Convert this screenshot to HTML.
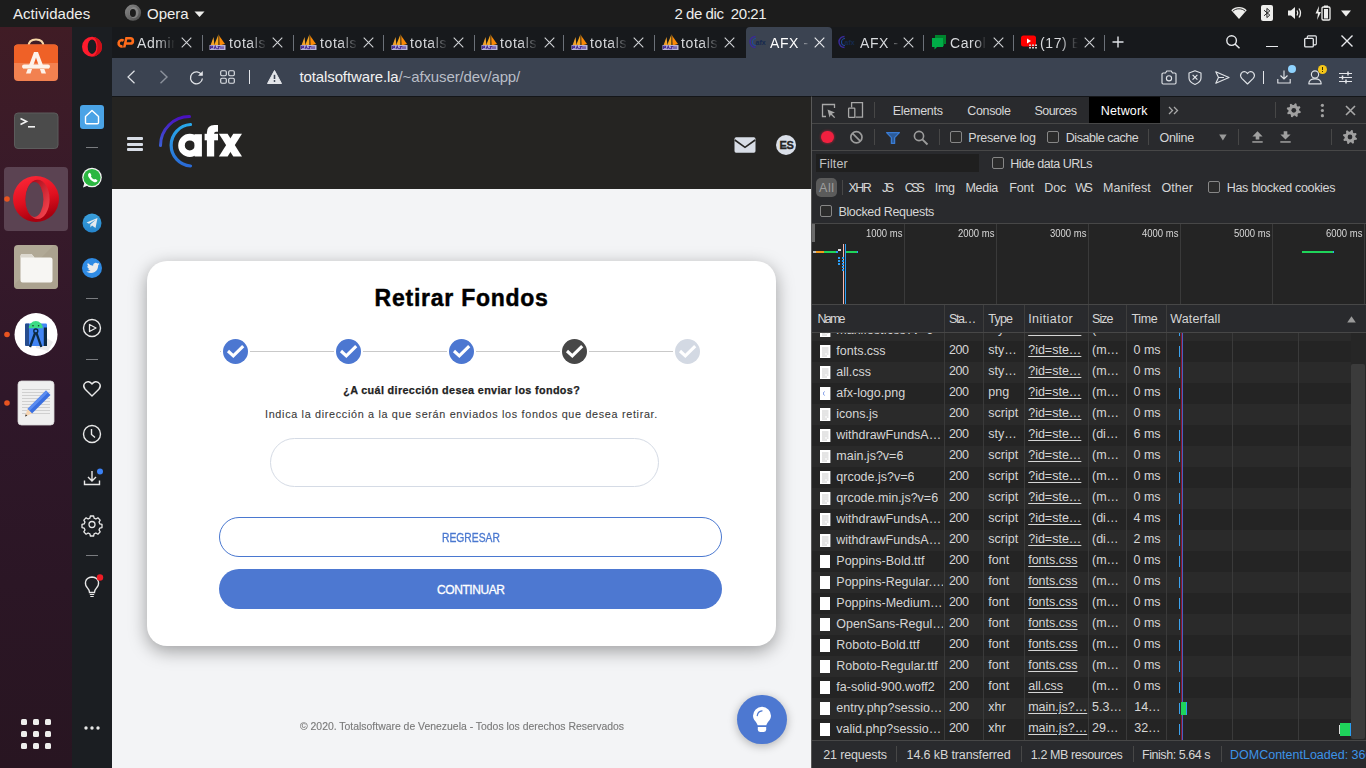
<!DOCTYPE html>
<html><head><meta charset="utf-8">
<style>
*{margin:0;padding:0;box-sizing:border-box}
html,body{width:1366px;height:768px;overflow:hidden;background:#1d1d1d;font-family:"Liberation Sans",sans-serif}
.a{position:absolute}
.t{position:absolute;white-space:nowrap;line-height:1}
svg{position:absolute;overflow:visible}
#topbar{left:0;top:0;width:1366px;height:27px;background:#1c1c1c}
#dock{left:0;top:27px;width:72px;height:741px;background:linear-gradient(180deg,#401c25 0%,#371a2a 25%,#2f1729 50%,#2b1625 75%,#281521 100%)}
#side{left:72px;top:27px;width:40px;height:741px;background:#1b1e22}
#tabs{left:112px;top:27px;width:1254px;height:31px;background:#17191c}
#addr{left:112px;top:58px;width:1254px;height:38px;background:#3b4351}
#page{left:112px;top:96px;width:699px;height:672px;background:#f3f4f6;overflow:hidden}
#hdr{left:0;top:0;width:699px;height:93px;background:#252422;border-top:1px solid #141619}
#dt{left:811px;top:96px;width:555px;height:672px;background:#242424;border-left:1px solid #595959;border-top:1px solid #141619;overflow:hidden}
</style></head><body>
<div id="topbar" class="a">
  <div class="t" style="left:13px;top:6px;font-size:15px;color:#eeeeec;letter-spacing:0.05px">Actividades</div>
  <svg style="left:124px;top:4px" width="18" height="18" viewBox="124 4 18 18"><defs><linearGradient id="opg" x1="0" y1="0" x2="1" y2="1"><stop offset="0" stop-color="#8a8a8a"/><stop offset="1" stop-color="#4a4a4a"/></linearGradient></defs><ellipse cx="133" cy="12.7" rx="8.1" ry="8.1" fill="url(#opg)"/><ellipse cx="133.9" cy="12.6" rx="4.6" ry="5.6" fill="#9a9a9a" opacity="0.55"/><ellipse cx="132.9" cy="13" rx="3" ry="3.9" fill="#1c1c1c"/></svg>
  <div class="t" style="left:147px;top:6px;font-size:15px;color:#eeeeec">Opera</div>
  <svg style="left:194px;top:10.5px" width="11" height="7" viewBox="0 0 11 7"><path d="M0.5 0.5h10L5.5 6z" fill="#eeeeec"/></svg>
  <div class="t" style="left:674.5px;top:6px;font-size:15px;color:#eeeeec;letter-spacing:-0.45px">2 de dic&nbsp; 20:21</div>
  <svg style="left:1231px;top:6px" width="16" height="14" viewBox="0 0 16 14"><path d="M8 13L0.3 4.2C2.4 2.2 5 1 8 1s5.6 1.2 7.7 3.2z" fill="#eeeeec"/><path d="M1.8 5.2 C3.6 3.6 5.6 2.8 8 2.8 S12.4 3.6 14.2 5.2" fill="none" stroke="#1c1c1c" stroke-width="0.9"/></svg>
  <svg style="left:1261px;top:5px" width="12" height="16" viewBox="0 0 12 16"><rect x="0" y="0" width="12" height="16" rx="2" fill="#eeeeec"/><path d="M3 5.2l5.8 4.9-2.9 2.5V3.4L8.8 5.9 3 10.8" fill="none" stroke="#1c1c1c" stroke-width="0.95"/></svg>
  <svg style="left:1287px;top:5px" width="15" height="16" viewBox="0 0 15 16"><path d="M1 5.5h3L8 2v12L4 10.5H1z" fill="#eeeeec"/><path d="M10 5.5q1.5 2.5 0 5M12 3.5q3 4.5 0 9" fill="none" stroke="#eeeeec" stroke-width="1.3"/></svg>
  <svg style="left:1315px;top:5px" width="16" height="16" viewBox="0 0 16 16"><path d="M4 1L0.5 8.5h2.5L2 15l4-8H3.5z" fill="#eeeeec"/><rect x="7" y="2" width="8" height="13" rx="1.2" fill="none" stroke="#eeeeec" stroke-width="1.3"/><rect x="9" y="0.5" width="4" height="2" fill="#eeeeec"/><rect x="9" y="4" width="4" height="9.5" fill="#eeeeec"/></svg>
  <svg style="left:1341px;top:10px" width="10" height="7" viewBox="0 0 10 7"><path d="M0 0.5h10L5 6.5z" fill="#eeeeec"/></svg>
</div>
<div id="dock" class="a">
<svg style="left:0;top:0" width="72" height="741" viewBox="0 27 72 741">
  <!-- software -->
  <path d="M28.5 46.5 Q28.5 39.5 36 39.5 Q43.5 39.5 43.5 46.5" fill="none" stroke="#f6d7a7" stroke-width="2"/>
  <rect x="14" y="44.5" width="44" height="36.5" rx="4" fill="#f28150"/>
  <path d="M14 48.5 a4 4 0 0 1 4-4 h36 a4 4 0 0 1 4 4 V63 H14z" fill="#ef6127"/>
  <path d="M26 73.5 L34 52 h4 L46 73.5 h-4.5 L36 57.5 30.5 73.5z" fill="#fdf2ea"/>
  <rect x="22" y="64.5" width="28" height="4" rx="2" fill="#fdf2ea"/>
  <rect x="23" y="68" width="26" height="1" fill="#f6c4a8"/>
  <!-- terminal -->
  <rect x="14.5" y="113" width="43.5" height="35.5" rx="3.5" fill="#4b4b4b" stroke="#5c5c5c" stroke-width="1"/>
  <path d="M20.5 118.5 L26.5 121.5 20.5 124.5" fill="none" stroke="#f2f2f2" stroke-width="1.6"/>
  <rect x="28" y="126" width="7" height="1.6" fill="#f2f2f2"/>
  <!-- opera highlight -->
  <rect x="4" y="167" width="64" height="64" rx="4" fill="#5b4352"/>
  <defs>
   <linearGradient id="og" x1="0" y1="0" x2="0.3" y2="1"><stop offset="0" stop-color="#ff2a3a"/><stop offset="0.6" stop-color="#e0101f"/><stop offset="1" stop-color="#a8000f"/></linearGradient>
   <linearGradient id="og2" x1="0" y1="0" x2="1" y2="1"><stop offset="0" stop-color="#9a0010"/><stop offset="1" stop-color="#ff4b55"/></linearGradient>
  </defs>
  <circle cx="36" cy="199" r="23" fill="url(#og)"/>
  <ellipse cx="37.6" cy="199.3" rx="12" ry="19.6" fill="url(#og2)"/>
  <ellipse cx="34.4" cy="199.5" rx="9" ry="17.4" fill="#5b4352"/>
  <circle cx="7" cy="199" r="2.8" fill="#e95420"/>
  <!-- files -->
  <rect x="14" y="245" width="44" height="44" rx="4" fill="#b1a996"/>
  <path d="M14 285 L54 245 h0 a4 4 0 0 1 4 4 v36 a4 4 0 0 1 -4 4 h-36 a4 4 0 0 1 -4 -4z" fill="#a79f8b" opacity="0.6"/>
  <path d="M20.5 256 a2 2 0 0 1 2 -2 h9 l3 3.5 h16 a2 2 0 0 1 2 2 v21 a2 2 0 0 1 -2 2 h-28 a2 2 0 0 1 -2 -2z" fill="#f7f6f3"/>
  <path d="M20.5 256 a2 2 0 0 1 2 -2 h9 l3 3.5 H20.5z" fill="#dcd8cf"/>
  <!-- android studio -->
  <circle cx="36" cy="334.5" r="21.5" fill="#ffffff"/>
  
  <path d="M34 330 L53 342 L48 351 L36 348z" fill="#ececec"/>
  <rect x="25" y="323.5" width="22" height="22.5" rx="1.2" fill="#4285f4"/>
  <path d="M25 324.7 a1.2 1.2 0 0 1 1.2 -1.2 H29 V346 H26.2 a1.2 1.2 0 0 1 -1.2 -1.2z" fill="#1d3b6e" opacity="0.75"/>
  <path d="M28.8 328.3 a7 7.3 0 0 1 14 0z" fill="#3ddc84"/>
  <circle cx="33" cy="325.8" r="0.8" fill="#1b3a2a"/><circle cx="38.6" cy="325.8" r="0.8" fill="#1b3a2a"/>
  <rect x="43.8" y="327.5" width="3.2" height="18.5" fill="#0d2a44"/>
  <path d="M35.8 331 L30 347 M35.8 331 L41.3 347" stroke="#0d2a44" stroke-width="2.3" fill="none"/>
  <circle cx="35.8" cy="331" r="2" fill="#4285f4" stroke="#0d2a44" stroke-width="1.4"/>
  <circle cx="7" cy="334.5" r="2.8" fill="#e95420"/>
  <!-- text editor -->
  <rect x="18" y="381" width="36" height="44" rx="3.5" fill="#efefef"/>
  <rect x="18" y="381" width="36" height="44" rx="3.5" fill="none" stroke="#d8d8d8" stroke-width="0.8"/>
  <g stroke="#c8c8c8" stroke-width="0.8"><path d="M22 389.5h28M22 392.5h28M22 395.5h28M22 398.5h28M22 401.5h28M22 404.5h28M22 407.5h28M22 410.5h28M22 413.5h28"/></g>
  <path d="M46 390.5 L50.5 395 L32 413.5 L27.5 409z" fill="#3a6fe0"/>
  <path d="M46 390.5 L48 392.5 L29.5 411 L27.5 409z" fill="#5b8cf0"/>
  <path d="M27.5 409 L32 413.5 L25 416.5z" fill="#f4d3b0"/>
  <path d="M25.8 414.2 L27.3 415.7 L25 416.5z" fill="#333"/>
  <circle cx="7" cy="403" r="2.8" fill="#e95420"/>
  <!-- grid -->
  <g fill="#eeeeec">
   <rect x="21" y="719" width="6" height="6" rx="1.5"/><rect x="33" y="719" width="6" height="6" rx="1.5"/><rect x="45" y="719" width="6" height="6" rx="1.5"/>
   <rect x="21" y="731" width="6" height="6" rx="1.5"/><rect x="33" y="731" width="6" height="6" rx="1.5"/><rect x="45" y="731" width="6" height="6" rx="1.5"/>
   <rect x="21" y="743" width="6" height="6" rx="1.5"/><rect x="33" y="743" width="6" height="6" rx="1.5"/><rect x="45" y="743" width="6" height="6" rx="1.5"/>
  </g>
</svg>
</div>
<div id="side" class="a">
<svg style="left:0;top:0" width="40" height="741" viewBox="72 27 40 741">
  <circle cx="92" cy="46.7" r="10" fill="#ff1b2d"/>
  <ellipse cx="92" cy="46.7" rx="4.3" ry="7.3" fill="#1b1e22"/>
  <path d="M92 36.7 a10 10 0 0 1 0 20 a5.5 10 0 0 0 0 -20z" fill="#cc0f16"/>
  <rect x="80" y="105" width="24" height="24" rx="3" fill="#4aa3e6"/>
  <path d="M85.5 116.5 L92 110.5 L98.5 116.5 V122.5 a1.2 1.2 0 0 1 -1.2 1.2 H86.7 a1.2 1.2 0 0 1 -1.2 -1.2z" fill="none" stroke="#fff" stroke-width="1.4" stroke-linejoin="round"/>
  <g stroke="#7a7c80" stroke-width="1.2"><path d="M86 147.5h12M86 298.5h12M86 359.5h12M86 555.5h12"/></g>
  <circle cx="92" cy="177.5" r="9.8" fill="#f4f4f4"/>
  <circle cx="92" cy="177.5" r="8.6" fill="#2bb741"/>
  <path d="M83 187.5 L84.5 182.5 L88 185.5z" fill="#f4f4f4"/>
  <path d="M88.8 173.3 q0.8-1 1.6 0 l0.9 1.6 q0.3 0.7 -0.4 1.3 q0.9 2.3 3.2 3.2 q0.6 -0.7 1.3 -0.4 l1.6 0.9 q1 0.8 0 1.6 q-1.4 1.4 -3.6 0.2 q-3.5 -1.9 -5 -5 q-1 -2.2 0.4 -3.4z" fill="#fff"/>
  <defs><linearGradient id="tg" x1="0" y1="0" x2="0" y2="1"><stop offset="0" stop-color="#3aa0dc"/><stop offset="1" stop-color="#2585cc"/></linearGradient></defs>
  <circle cx="92" cy="223" r="9.5" fill="url(#tg)"/>
  <path d="M86.5 222.5 L97.5 218 L95.5 228 L92 225.5 L90.5 227.5 L90.3 224.5 L96 219.5 L89 223.8z" fill="#e6eaee"/>
  <circle cx="92" cy="268" r="10" fill="#2f8be4"/>
  <path d="M86.5 271.5 q2.5 0.3 4 -1 q-2 -0.3 -2.5 -1.8 q0.8 0.1 1.2 -0.1 q-2 -0.6 -2 -2.6 q0.6 0.3 1.2 0.3 q-1.8 -1.5 -0.6 -3.3 q2.2 2.6 5.3 2.8 q-0.2 -2.6 2.4 -3.1 q1.2 -0.1 2 0.8 q1 -0.2 1.6 -0.6 q-0.3 1 -1.1 1.5 q0.8 0 1.4 -0.4 q-0.5 0.8 -1.2 1.3 q0.1 4.4 -3.5 6.7 q-3.6 2.1 -7.7 -0.1z" fill="#ececec"/>
  <circle cx="92" cy="328" r="8.5" fill="none" stroke="#e8e8e8" stroke-width="1.4"/>
  <path d="M89.5 324.5 L96 328 L89.5 331.5z" fill="none" stroke="#e8e8e8" stroke-width="1.3" stroke-linejoin="round"/>
  <path d="M92 396 L85.2 389.2 q-2.4-2.6 -1-5.2 q1.6-2.6 4.4-2.2 q2 0.4 3.4 2.2 q1.4-1.8 3.4-2.2 q2.8-0.4 4.4 2.2 q1.4 2.6 -1 5.2z" fill="none" stroke="#e8e8e8" stroke-width="1.4" stroke-linejoin="round"/>
  <circle cx="92" cy="434" r="8.5" fill="none" stroke="#e8e8e8" stroke-width="1.4"/>
  <path d="M91.5 429 V434.5 L95 437.5" fill="none" stroke="#e8e8e8" stroke-width="1.4"/>
  <path d="M92 471 V481 M88 477 L92 481 L96 477 M84.5 480.5 V484.5 H99.5 V480.5" fill="none" stroke="#e8e8e8" stroke-width="1.4"/>
  <circle cx="100" cy="471.5" r="3" fill="#3b82f6"/>
  <g transform="translate(92 524.5)"><path d="M-1.6 -8.5 h3.2 l0.5 2.2 l1.8 0.8 l2 -1.2 l2.3 2.3 l-1.2 2 l0.8 1.8 l2.2 0.5 v3.2 l-2.2 0.5 l-0.8 1.8 l1.2 2 l-2.3 2.3 l-2 -1.2 l-1.8 0.8 l-0.5 2.2 h-3.2 l-0.5 -2.2 l-1.8 -0.8 l-2 1.2 l-2.3 -2.3 l1.2 -2 l-0.8 -1.8 l-2.2 -0.5 v-3.2 l2.2 -0.5 l0.8 -1.8 l-1.2 -2 l2.3 -2.3 l2 1.2 l1.8 -0.8z" fill="none" stroke="#e8e8e8" stroke-width="1.3" stroke-linejoin="round"/><circle r="3" fill="none" stroke="#e8e8e8" stroke-width="1.3"/></g>
  <path d="M89.5 592.5 q0-2.5 -2-4.5 q-2.5-2.5 -2-6 q0.8-4.5 6.5-5 q5.7 0.5 6.5 5 q0.5 3.5 -2 6 q-2 2 -2 4.5z" fill="none" stroke="#e8e8e8" stroke-width="1.3"/>
  <path d="M89.8 594.5h4.4M90.3 596.5h3.4" stroke="#e8e8e8" stroke-width="1.2"/>
  <circle cx="100" cy="577.5" r="3.2" fill="#ee1c25"/>
  <g fill="#e8e8e8"><circle cx="86" cy="728" r="1.7"/><circle cx="92" cy="728" r="1.7"/><circle cx="98" cy="728" r="1.7"/></g>
</svg>
</div>
<div id="tabs" class="a"></div>
<svg style="left:114px;top:32px" width="24" height="20" viewBox="114 32 24 20"><path d="M123.6 40.7 A3.15 3.15 0 1 0 122.6 46.3" fill="none" stroke="#ff6c1a" stroke-width="2.6"/><path d="M125.4 37 H130.3 A3.9 3.9 0 0 1 130.3 44.8 H125.9 L126.5 42.3 H130.2 A1.35 1.35 0 0 0 130.2 39.6 H127.3 L125.5 47.6 H122.9z" fill="#ff6c1a"/></svg>
<div class="t" style="left:137px;top:36px;font-size:14px;color:#d8dadd;width:38px;overflow:hidden;-webkit-mask-image:linear-gradient(90deg,#000 55%,transparent 100%);height:16px;line-height:14px;letter-spacing:0.6px">Admin</div>
<svg style="left:181px;top:37px" width="11" height="11" viewBox="0 0 11 11"><path d="M0.7 0.7 L10.3 10.3 M10.3 0.7 L0.7 10.3" stroke="#d0d2d6" stroke-width="1.1"/></svg>
<div class="a" style="left:202px;top:35px;width:1px;height:16px;background:#6b7078"></div>
<div class="a" style="left:293px;top:35px;width:1px;height:16px;background:#6b7078"></div>
<div class="a" style="left:383px;top:35px;width:1px;height:16px;background:#6b7078"></div>
<div class="a" style="left:474px;top:35px;width:1px;height:16px;background:#6b7078"></div>
<div class="a" style="left:563px;top:35px;width:1px;height:16px;background:#6b7078"></div>
<div class="a" style="left:654px;top:35px;width:1px;height:16px;background:#6b7078"></div>
<svg style="left:208.5px;top:34px" width="17" height="17" viewBox="0 0 17 17"><path d="M1.5 11.5 L4.5 3 L5.5 11.5z" fill="#f2a12a"/><path d="M5 11.5 L9.5 0.3 L9.5 11.5z" fill="#f6a51e"/><path d="M10 1.5 L16 10 L10.5 11.5z" fill="#fb8a06"/><path d="M9.5 0.3 L10.5 1.8 L10 11.5 H9.3z" fill="#5a3a10" opacity="0.6"/><rect x="0.5" y="11" width="16" height="5" fill="#b9b3d6"/><path d="M1.5 15 V12.2 H3.6 V13.6 H1.8 M5 15 L6.2 12.2 L7.4 15 M8.6 12.5 H10.4 L8.6 14.8 H10.4 M12 12.2 V15 M14 12.2 V15" fill="none" stroke="#4a2f96" stroke-width="1.1"/></svg>
<div class="t" style="left:229px;top:36px;font-size:14px;color:#d8dadd;width:38px;overflow:hidden;-webkit-mask-image:linear-gradient(90deg,#000 55%,transparent 100%);height:16px;line-height:14px;letter-spacing:0.6px">totalsoftware</div>
<svg style="left:272px;top:37px" width="11" height="11" viewBox="0 0 11 11"><path d="M0.7 0.7 L10.3 10.3 M10.3 0.7 L0.7 10.3" stroke="#d0d2d6" stroke-width="1.1"/></svg>
<svg style="left:299.5px;top:34px" width="17" height="17" viewBox="0 0 17 17"><path d="M1.5 11.5 L4.5 3 L5.5 11.5z" fill="#f2a12a"/><path d="M5 11.5 L9.5 0.3 L9.5 11.5z" fill="#f6a51e"/><path d="M10 1.5 L16 10 L10.5 11.5z" fill="#fb8a06"/><path d="M9.5 0.3 L10.5 1.8 L10 11.5 H9.3z" fill="#5a3a10" opacity="0.6"/><rect x="0.5" y="11" width="16" height="5" fill="#b9b3d6"/><path d="M1.5 15 V12.2 H3.6 V13.6 H1.8 M5 15 L6.2 12.2 L7.4 15 M8.6 12.5 H10.4 L8.6 14.8 H10.4 M12 12.2 V15 M14 12.2 V15" fill="none" stroke="#4a2f96" stroke-width="1.1"/></svg>
<div class="t" style="left:320px;top:36px;font-size:14px;color:#d8dadd;width:38px;overflow:hidden;-webkit-mask-image:linear-gradient(90deg,#000 55%,transparent 100%);height:16px;line-height:14px;letter-spacing:0.6px">totalsoftware</div>
<svg style="left:363px;top:37px" width="11" height="11" viewBox="0 0 11 11"><path d="M0.7 0.7 L10.3 10.3 M10.3 0.7 L0.7 10.3" stroke="#d0d2d6" stroke-width="1.1"/></svg>
<svg style="left:390.5px;top:34px" width="17" height="17" viewBox="0 0 17 17"><path d="M1.5 11.5 L4.5 3 L5.5 11.5z" fill="#f2a12a"/><path d="M5 11.5 L9.5 0.3 L9.5 11.5z" fill="#f6a51e"/><path d="M10 1.5 L16 10 L10.5 11.5z" fill="#fb8a06"/><path d="M9.5 0.3 L10.5 1.8 L10 11.5 H9.3z" fill="#5a3a10" opacity="0.6"/><rect x="0.5" y="11" width="16" height="5" fill="#b9b3d6"/><path d="M1.5 15 V12.2 H3.6 V13.6 H1.8 M5 15 L6.2 12.2 L7.4 15 M8.6 12.5 H10.4 L8.6 14.8 H10.4 M12 12.2 V15 M14 12.2 V15" fill="none" stroke="#4a2f96" stroke-width="1.1"/></svg>
<div class="t" style="left:410px;top:36px;font-size:14px;color:#d8dadd;width:38px;overflow:hidden;-webkit-mask-image:linear-gradient(90deg,#000 55%,transparent 100%);height:16px;line-height:14px;letter-spacing:0.6px">totalsoftware</div>
<svg style="left:453px;top:37px" width="11" height="11" viewBox="0 0 11 11"><path d="M0.7 0.7 L10.3 10.3 M10.3 0.7 L0.7 10.3" stroke="#d0d2d6" stroke-width="1.1"/></svg>
<svg style="left:480.5px;top:34px" width="17" height="17" viewBox="0 0 17 17"><path d="M1.5 11.5 L4.5 3 L5.5 11.5z" fill="#f2a12a"/><path d="M5 11.5 L9.5 0.3 L9.5 11.5z" fill="#f6a51e"/><path d="M10 1.5 L16 10 L10.5 11.5z" fill="#fb8a06"/><path d="M9.5 0.3 L10.5 1.8 L10 11.5 H9.3z" fill="#5a3a10" opacity="0.6"/><rect x="0.5" y="11" width="16" height="5" fill="#b9b3d6"/><path d="M1.5 15 V12.2 H3.6 V13.6 H1.8 M5 15 L6.2 12.2 L7.4 15 M8.6 12.5 H10.4 L8.6 14.8 H10.4 M12 12.2 V15 M14 12.2 V15" fill="none" stroke="#4a2f96" stroke-width="1.1"/></svg>
<div class="t" style="left:500px;top:36px;font-size:14px;color:#d8dadd;width:38px;overflow:hidden;-webkit-mask-image:linear-gradient(90deg,#000 55%,transparent 100%);height:16px;line-height:14px;letter-spacing:0.6px">totalsoftware</div>
<svg style="left:544px;top:37px" width="11" height="11" viewBox="0 0 11 11"><path d="M0.7 0.7 L10.3 10.3 M10.3 0.7 L0.7 10.3" stroke="#d0d2d6" stroke-width="1.1"/></svg>
<svg style="left:570.5px;top:34px" width="17" height="17" viewBox="0 0 17 17"><path d="M1.5 11.5 L4.5 3 L5.5 11.5z" fill="#f2a12a"/><path d="M5 11.5 L9.5 0.3 L9.5 11.5z" fill="#f6a51e"/><path d="M10 1.5 L16 10 L10.5 11.5z" fill="#fb8a06"/><path d="M9.5 0.3 L10.5 1.8 L10 11.5 H9.3z" fill="#5a3a10" opacity="0.6"/><rect x="0.5" y="11" width="16" height="5" fill="#b9b3d6"/><path d="M1.5 15 V12.2 H3.6 V13.6 H1.8 M5 15 L6.2 12.2 L7.4 15 M8.6 12.5 H10.4 L8.6 14.8 H10.4 M12 12.2 V15 M14 12.2 V15" fill="none" stroke="#4a2f96" stroke-width="1.1"/></svg>
<div class="t" style="left:590px;top:36px;font-size:14px;color:#d8dadd;width:38px;overflow:hidden;-webkit-mask-image:linear-gradient(90deg,#000 55%,transparent 100%);height:16px;line-height:14px;letter-spacing:0.6px">totalsoftware</div>
<svg style="left:633px;top:37px" width="11" height="11" viewBox="0 0 11 11"><path d="M0.7 0.7 L10.3 10.3 M10.3 0.7 L0.7 10.3" stroke="#d0d2d6" stroke-width="1.1"/></svg>
<svg style="left:661.5px;top:34px" width="17" height="17" viewBox="0 0 17 17"><path d="M1.5 11.5 L4.5 3 L5.5 11.5z" fill="#f2a12a"/><path d="M5 11.5 L9.5 0.3 L9.5 11.5z" fill="#f6a51e"/><path d="M10 1.5 L16 10 L10.5 11.5z" fill="#fb8a06"/><path d="M9.5 0.3 L10.5 1.8 L10 11.5 H9.3z" fill="#5a3a10" opacity="0.6"/><rect x="0.5" y="11" width="16" height="5" fill="#b9b3d6"/><path d="M1.5 15 V12.2 H3.6 V13.6 H1.8 M5 15 L6.2 12.2 L7.4 15 M8.6 12.5 H10.4 L8.6 14.8 H10.4 M12 12.2 V15 M14 12.2 V15" fill="none" stroke="#4a2f96" stroke-width="1.1"/></svg>
<div class="t" style="left:681px;top:36px;font-size:14px;color:#d8dadd;width:38px;overflow:hidden;-webkit-mask-image:linear-gradient(90deg,#000 55%,transparent 100%);height:16px;line-height:14px;letter-spacing:0.6px">totalsoftware</div>
<svg style="left:724px;top:37px" width="11" height="11" viewBox="0 0 11 11"><path d="M0.7 0.7 L10.3 10.3 M10.3 0.7 L0.7 10.3" stroke="#d0d2d6" stroke-width="1.1"/></svg>
<div class="a" style="left:746px;top:27px;width:86px;height:31px;background:#3b4351;border-radius:4px 4px 0 0"></div>
<svg style="left:751px;top:35px" width="16" height="14" viewBox="0 0 16 14"><path d="M4.5 1.5 A5.5 5.5 0 0 0 4.5 12.5" fill="none" stroke="#3a2a9a" stroke-width="1.4"/><path d="M5 3.5 A3.5 3.5 0 0 0 5 10.5" fill="none" stroke="#1e4a9a" stroke-width="1.1"/><text x="4.6" y="9.6" font-family="Liberation Sans" font-weight="bold" font-size="7" fill="#15294f">afx</text></svg>
<div class="t" style="left:770px;top:36px;font-size:14px;color:#ffffff;width:40px;overflow:hidden;-webkit-mask-image:linear-gradient(90deg,#000 70%,transparent 100%);height:16px;line-height:14px;letter-spacing:0.6px">AFX - Retirar</div>
<svg style="left:813.5px;top:37px" width="11" height="11" viewBox="0 0 11 11"><path d="M0.7 0.7 L10.3 10.3 M10.3 0.7 L0.7 10.3" stroke="#e8eaed" stroke-width="1.15"/></svg>
<svg style="left:840px;top:35px" width="16" height="14" viewBox="0 0 16 14"><path d="M4.5 1.5 A5.5 5.5 0 0 0 4.5 12.5" fill="none" stroke="#3a2a9a" stroke-width="1.4"/><path d="M5 3.5 A3.5 3.5 0 0 0 5 10.5" fill="none" stroke="#1e4a9a" stroke-width="1.1"/><text x="4.6" y="9.6" font-family="Liberation Sans" font-weight="bold" font-size="7" fill="#15294f">afx</text></svg>
<div class="t" style="left:860px;top:36px;font-size:14px;color:#d8dadd;width:40px;overflow:hidden;-webkit-mask-image:linear-gradient(90deg,#000 70%,transparent 100%);height:16px;line-height:14px;letter-spacing:0.6px">AFX - Retirar</div>
<svg style="left:903px;top:37px" width="11" height="11" viewBox="0 0 11 11"><path d="M0.7 0.7 L10.3 10.3 M10.3 0.7 L0.7 10.3" stroke="#d0d2d6" stroke-width="1.1"/></svg>
<div class="a" style="left:923px;top:35px;width:1px;height:16px;background:#6b7078"></div>
<svg style="left:931px;top:34px" width="16" height="16" viewBox="0 0 16 16"><path d="M4 1 H15 V10 H13 V12.5 L10.5 10 H4z" fill="#00832d"/><path d="M1 4 H12 V13 H6 L3.5 15.5 V13 H1z" fill="#00ac47"/><path d="M4 4 H12 V10 H4z" fill="#00ac47"/></svg>
<div class="t" style="left:950px;top:36px;font-size:14px;color:#d8dadd;width:36px;overflow:hidden;-webkit-mask-image:linear-gradient(90deg,#000 70%,transparent 100%);height:16px;line-height:14px;letter-spacing:0.6px">Carol</div>
<svg style="left:993px;top:37px" width="11" height="11" viewBox="0 0 11 11"><path d="M0.7 0.7 L10.3 10.3 M10.3 0.7 L0.7 10.3" stroke="#d0d2d6" stroke-width="1.1"/></svg>
<div class="a" style="left:1013px;top:35px;width:1px;height:16px;background:#6b7078"></div>
<svg style="left:1021px;top:35px" width="16" height="15" viewBox="0 0 16 15"><rect x="0" y="0.5" width="15" height="11" rx="2.5" fill="#ff0000"/><path d="M6 3.5 L10 6 L6 8.5z" fill="#fff"/><g fill="#cfcfcf"><rect x="8" y="9.5" width="2" height="1.5"/><rect x="11" y="9.5" width="2" height="1.5"/><rect x="14" y="9.5" width="2" height="1.5"/><rect x="8" y="12" width="2" height="1.5"/><rect x="11" y="12" width="2" height="1.5"/><rect x="14" y="12" width="2" height="1.5"/></g></svg>
<div class="t" style="left:1040px;top:36px;font-size:14px;color:#d8dadd;width:38px;overflow:hidden;-webkit-mask-image:linear-gradient(90deg,#000 55%,transparent 100%);height:16px;line-height:14px;letter-spacing:0.6px">(17) Bad</div>
<svg style="left:1083.5px;top:37px" width="11" height="11" viewBox="0 0 11 11"><path d="M0.7 0.7 L10.3 10.3 M10.3 0.7 L0.7 10.3" stroke="#d0d2d6" stroke-width="1.1"/></svg>
<div class="a" style="left:1104px;top:35px;width:1px;height:16px;background:#6b7078"></div>
<svg style="left:1112px;top:36px" width="12" height="12" viewBox="0 0 12 12"><path d="M6 0.5 V11.5 M0.5 6 H11.5" stroke="#e0e2e6" stroke-width="1.4"/></svg>
<svg style="left:1226px;top:35px" width="15" height="14" viewBox="0 0 15 14"><circle cx="5.6" cy="5.6" r="4.8" fill="none" stroke="#e8eaed" stroke-width="1.4"/><path d="M9 9 L13.5 13.3" stroke="#e8eaed" stroke-width="1.5"/></svg>
<div class="a" style="left:1266px;top:46.2px;width:12px;height:1.2px;background:#e8eaed"></div>
<svg style="left:1304px;top:35px" width="13" height="13" viewBox="0 0 13 13"><rect x="0.7" y="3.3" width="8.6" height="8.6" rx="1" fill="#17191c" stroke="#e8eaed" stroke-width="1.3"/><path d="M3.3 3.3 V1.8 a1 1 0 0 1 1 -1 h7 a1 1 0 0 1 1 1 v7 a1 1 0 0 1 -1 1 H9.3" fill="none" stroke="#e8eaed" stroke-width="1.15"/></svg>
<svg style="left:1341px;top:35px" width="12" height="12" viewBox="0 0 12 12"><path d="M0.5 0.5 L11.5 11.5 M11.5 0.5 L0.5 11.5" stroke="#e8eaed" stroke-width="1.4"/></svg>
<div id="addr" class="a"></div>
<svg style="left:126px;top:70px" width="10" height="14" viewBox="0 0 10 14"><path d="M8.5 0.8 L2 7 L8.5 13.2" fill="none" stroke="#dfe2e6" stroke-width="1.2"/></svg>
<svg style="left:159px;top:70px" width="10" height="14" viewBox="0 0 10 14"><path d="M1.5 0.8 L8 7 L1.5 13.2" fill="none" stroke="#8c929c" stroke-width="1.4"/></svg>
<svg style="left:189px;top:70px" width="15" height="15" viewBox="0 0 15 15"><path d="M12.6 4.8 A6 6 0 1 0 13.4 8.5" fill="none" stroke="#dfe2e6" stroke-width="1.3"/><path d="M13.8 1 V5.8 H9z" fill="#e4e6ea"/></svg>
<svg style="left:220px;top:70px" width="15" height="14" viewBox="0 0 15 14"><g fill="none" stroke="#dfe2e6" stroke-width="1.15"><rect x="0.7" y="0.7" width="5.6" height="5" rx="1.2"/><rect x="8.7" y="0.7" width="5.6" height="5" rx="1.2"/><rect x="0.7" y="8.2" width="5.6" height="5" rx="1.2"/><rect x="8.7" y="8.2" width="5.6" height="5" rx="1.2"/></g></svg>
<div class="a" style="left:249px;top:70px;width:1.3px;height:14px;background:#e4e6ea"></div>
<svg style="left:267px;top:70px" width="15" height="14" viewBox="0 0 15 14"><path d="M7.5 0.5 L14.5 13.5 H0.5z" fill="#e4e6ea" stroke="#e4e6ea" stroke-width="1" stroke-linejoin="round"/><path d="M7.5 4.8 V9" stroke="#3b4351" stroke-width="1.6"/><circle cx="7.5" cy="11" r="0.9" fill="#3b4351"/></svg>
<div class="t" style="left:299.5px;top:68.8px;font-size:15px;color:#f2f2f2;letter-spacing:-0.12px">totalsoftware.la<span style="color:#b9bec7">/~afxuser/dev/app/</span></div>
<svg style="left:1161px;top:70px" width="16" height="15" viewBox="0 0 16 15"><path d="M1 4.2 a1.2 1.2 0 0 1 1.2 -1.2 H4.5 L5.8 1 H10.2 L11.5 3 H13.8 a1.2 1.2 0 0 1 1.2 1.2 V12.8 a1.2 1.2 0 0 1 -1.2 1.2 H2.2 a1.2 1.2 0 0 1 -1.2 -1.2z" fill="none" stroke="#dfe2e6" stroke-width="1.15"/><circle cx="8" cy="8.3" r="2.6" fill="none" stroke="#dfe2e6" stroke-width="1.15"/></svg>
<svg style="left:1188px;top:70px" width="14" height="15" viewBox="0 0 14 15"><path d="M7 0.8 L13 3 V8 q0 4 -6 6.5 q-6 -2.5 -6 -6.5 V3z" fill="none" stroke="#dfe2e6" stroke-width="1.15" stroke-linejoin="round"/><path d="M4.6 4.8 L9.4 9.6 M9.4 4.8 L4.6 9.6" stroke="#e4e6ea" stroke-width="1.2"/></svg>
<svg style="left:1215px;top:71px" width="15" height="13" viewBox="0 0 15 13"><path d="M0.8 0.8 L14 6.5 L0.8 12.2 L3.5 6.5z M3.5 6.5 H9" fill="none" stroke="#dfe2e6" stroke-width="1.15" stroke-linejoin="round"/></svg>
<svg style="left:1240px;top:71px" width="15" height="14" viewBox="0 0 15 14"><path d="M7.5 13 L1.8 7.3 q-2.2 -2.5 -0.6 -4.9 q1.6 -2.2 4 -1.6 q1.4 0.4 2.3 1.8 q0.9 -1.4 2.3 -1.8 q2.4 -0.6 4 1.6 q1.6 2.4 -0.6 4.9z" fill="none" stroke="#dfe2e6" stroke-width="1.15" stroke-linejoin="round"/></svg>
<div class="a" style="left:1263px;top:71px;width:1.3px;height:13px;background:#e4e6ea"></div>
<svg style="left:1277px;top:70px" width="14" height="14" viewBox="0 0 14 14"><path d="M7 0.5 V9 M3.5 5.5 L7 9 L10.5 5.5 M0.8 9 V13 H13.2 V9" fill="none" stroke="#dfe2e6" stroke-width="1.15"/></svg>
<div class="a" style="left:1288px;top:65px;width:8px;height:8px;border-radius:50%;background:#8fd3fe"></div>
<svg style="left:1308px;top:70px" width="14" height="15" viewBox="0 0 14 15"><circle cx="7" cy="4.5" r="3.6" fill="none" stroke="#dfe2e6" stroke-width="1.15"/><path d="M0.8 13.8 q0 -5 6.2 -5 q6.2 0 6.2 5z" fill="none" stroke="#dfe2e6" stroke-width="1.15" stroke-linejoin="round"/></svg>
<div class="a" style="left:1318px;top:65px;width:9px;height:9px;border-radius:50%;background:#f4c518"></div>
<div class="a" style="left:1322px;top:66.5px;width:1.2px;height:3.5px;background:#3b3000"></div>
<div class="a" style="left:1322px;top:71px;width:1.2px;height:1.2px;background:#3b3000"></div>
<svg style="left:1339px;top:71px" width="13" height="13" viewBox="0 0 13 13"><g stroke="#e4e6ea" stroke-width="1.2"><path d="M0 2.5 H13 M0 6.5 H13 M0 10.5 H13"/><path d="M9 0.5 V4.5 M3.5 4.5 V8.5 M7 8.5 V12.5" stroke-width="1.5"/></g></svg>
<div id="page" class="a">
  <div id="hdr" class="a"></div>
</div>
<div class="a" style="left:127px;top:137.3px;width:16.4px;height:2.8px;background:#d8dde6;border-radius:1px"></div>
<div class="a" style="left:127px;top:142.9px;width:16.4px;height:2.8px;background:#d8dde6;border-radius:1px"></div>
<div class="a" style="left:127px;top:148.4px;width:16.4px;height:2.8px;background:#d8dde6;border-radius:1px"></div>
<svg style="left:150px;top:108px" width="50" height="66" viewBox="150 108 50 66">
  <defs>
    <linearGradient id="lg1" x1="0" y1="0" x2="0" y2="1"><stop offset="0" stop-color="#4a10c0"/><stop offset="1" stop-color="#3b5fd6"/></linearGradient>
    <linearGradient id="lg2" x1="0" y1="0" x2="0" y2="1"><stop offset="0" stop-color="#28a8ea"/><stop offset="0.5" stop-color="#2a8ce0"/><stop offset="1" stop-color="#2a6ad6"/></linearGradient>
  </defs>
  <path d="M189.5 116.5 A29 29 0 0 0 160.5 145.5" fill="none" stroke="url(#lg1)" stroke-width="3" stroke-linecap="round"/>
  <path d="M190.5 124.5 A20.8 20.8 0 0 0 190.5 166" fill="none" stroke="url(#lg2)" stroke-width="3.2" stroke-linecap="round"/>
</svg>
<svg style="left:170px;top:120px" width="80" height="40" viewBox="170 120 80 40"><g fill="#ffffff">
<circle cx="189.8" cy="145.4" r="8.3" fill="none" stroke="#fff" stroke-width="6.6"/>
<rect x="194.6" y="134.2" width="7.3" height="22.3"/>
<path d="M206.9 156.6 V132.5 Q206.9 125 214.5 125 H218 V131.8 H216 Q214.2 131.8 214.2 133.5 V156.6z"/>
<rect x="204.6" y="133.8" width="13.4" height="6.5"/>
<path d="M218.9 133.8 H227.6 L242 156.6 H233.3z"/>
<path d="M233.3 133.8 H242 L227.6 156.6 H218.9z"/>
</g></svg>
<svg style="left:734px;top:136.5px" width="22" height="16" viewBox="0 0 22 16"><rect x="0.5" y="0.3" width="21" height="15.4" rx="1.6" fill="#d8dde6"/><path d="M0.8 3 L11 10.3 L21.2 3" fill="none" stroke="#252422" stroke-width="1.6"/></svg>
<div class="a" style="left:775.9px;top:134.9px;width:20.2px;height:20.2px;border-radius:50%;background:#dadfe8"></div>
<div class="t" style="left:779.6px;top:139.89px;font-size:11px;font-weight:bold;color:#252525;letter-spacing:-0.5px;-webkit-text-stroke:0.35px #252525">ES</div>
<div class="a" style="left:147px;top:261px;width:629px;height:385px;background:#ffffff;border-radius:20px;box-shadow:0 5px 18px rgba(0,0,0,0.36)"></div>
<div class="t" style="left:374.6px;top:287.35px;font-size:23px;font-weight:bold;color:#000000;letter-spacing:0.75px;-webkit-text-stroke:0.45px #000">Retirar Fondos</div>
<div class="a" style="left:220px;top:351px;width:455px;height:1px;background:#c9c9c9"></div>
<div class="a" style="left:221.0px;top:336.9px;width:29px;height:29px;border-radius:50%;background:#ffffff"></div>
<svg style="left:223.0px;top:338.9px" width="25" height="25" viewBox="0 0 25 25"><circle cx="12.5" cy="12.5" r="12.5" fill="#4c77d1"/><path d="M5 12 L10.3 16.9 L20.2 7.1" fill="none" stroke="#ffffff" stroke-width="3.1"/></svg>
<div class="a" style="left:334.0px;top:336.9px;width:29px;height:29px;border-radius:50%;background:#ffffff"></div>
<svg style="left:336.0px;top:338.9px" width="25" height="25" viewBox="0 0 25 25"><circle cx="12.5" cy="12.5" r="12.5" fill="#4c77d1"/><path d="M5 12 L10.3 16.9 L20.2 7.1" fill="none" stroke="#ffffff" stroke-width="3.1"/></svg>
<div class="a" style="left:447.0px;top:336.9px;width:29px;height:29px;border-radius:50%;background:#ffffff"></div>
<svg style="left:449.0px;top:338.9px" width="25" height="25" viewBox="0 0 25 25"><circle cx="12.5" cy="12.5" r="12.5" fill="#4c77d1"/><path d="M5 12 L10.3 16.9 L20.2 7.1" fill="none" stroke="#ffffff" stroke-width="3.1"/></svg>
<div class="a" style="left:560.0px;top:336.9px;width:29px;height:29px;border-radius:50%;background:#ffffff"></div>
<svg style="left:562.0px;top:338.9px" width="25" height="25" viewBox="0 0 25 25"><circle cx="12.5" cy="12.5" r="12.5" fill="#474747"/><path d="M5 12 L10.3 16.9 L20.2 7.1" fill="none" stroke="#ffffff" stroke-width="3.1"/></svg>
<div class="a" style="left:673.0px;top:336.9px;width:29px;height:29px;border-radius:50%;background:#ffffff"></div>
<svg style="left:675.0px;top:338.9px" width="25" height="25" viewBox="0 0 25 25"><circle cx="12.5" cy="12.5" r="12.5" fill="#d3d9e3"/><path d="M5 12 L10.3 16.9 L20.2 7.1" fill="none" stroke="#ffffff" stroke-width="3.1"/></svg>
<div class="t" style="left:343.2px;top:384.86px;font-size:10.8px;font-weight:bold;color:#222222;letter-spacing:0.35px;-webkit-text-stroke:0.25px #222">¿A cuál dirección desea enviar los fondos?</div>
<div class="t" style="left:265px;top:409.06px;font-size:10.8px;color:#3a3a3a;letter-spacing:0.68px;-webkit-text-stroke:0.1px #3a3a3a">Indica la dirección a la que serán enviados los fondos que desea retirar.</div>
<div class="a" style="left:270px;top:438px;width:389px;height:49px;border:1px solid #d5dbe5;border-radius:25px;background:#fff"></div>
<div class="a" style="left:219px;top:517px;width:503px;height:40px;border:1px solid #4a78d0;border-radius:20px;background:#fff"></div>
<div class="t" style="left:442.2px;top:531.94px;font-size:12px;color:#4a78d0;transform:scaleX(0.86);transform-origin:0 0;-webkit-text-stroke:0.3px #4a78d0">REGRESAR</div>
<div class="a" style="left:219px;top:569px;width:503px;height:40px;border-radius:20px;background:#4d78d1"></div>
<div class="t" style="left:437px;top:583.64px;font-size:12px;color:#ffffff;letter-spacing:-0.42px;-webkit-text-stroke:0.3px #fff">CONTINUAR</div>
<div class="t" style="left:299.7px;top:720.91px;font-size:11.8px;color:#7a7a7a;-webkit-text-stroke:0.15px #7a7a7a;transform:scaleX(0.883);transform-origin:0 0">© 2020. Totalsoftware de Venezuela - Todos los derechos Reservados</div>
<div class="a" style="left:737.3px;top:695px;width:49.4px;height:49.4px;border-radius:50%;background:#4d78d1;box-shadow:0 2px 10px rgba(0,0,0,0.28)"></div>
<svg style="left:740px;top:700px" width="44" height="40" viewBox="740 700 44 40"><path d="M757.6 725.3 C757.2 722.3 753 720.3 753 715.8 A9 9 0 0 1 771 715.8 C771 720.3 766.8 722.3 766.4 725.3 Z" fill="#fff"/><path d="M757.8 727 H766.2 V729.6 Q766.2 731.9 763.9 731.9 H760.1 Q757.8 731.9 757.8 729.6 Z" fill="#fff"/><path d="M757.3 715.5 Q757.8 711.3 762 710.8" fill="none" stroke="#4d78d1" stroke-width="1.3" stroke-linecap="round"/></svg>

<div id="dt" class="a"></div>
<div id="dtc">
<div class="a" style="left:812px;top:97px;width:554px;height:126px;background:#292a2d;"></div>
<div class="a" style="left:812px;top:123px;width:554px;height:1px;background:#474747;"></div>
<div class="a" style="left:812px;top:150px;width:554px;height:1px;background:#474747;"></div>
<div class="a" style="left:812px;top:223px;width:554px;height:1px;background:#474747;"></div>
<svg style="left:821px;top:103px" width="15" height="15" viewBox="0 0 15 15"><path d="M5 13.5 H1.5 V1.5 H13.5 V5" fill="none" stroke="#a8a8a8" stroke-width="1.3"/><path d="M6.5 6.5 L14 9.5 L10.8 10.8 L14.2 14.2 L13.2 15 L9.8 11.8 L8.5 14.5z" fill="#a8a8a8"/></svg>
<svg style="left:846px;top:101px" width="18" height="18" viewBox="846 101 18 18"><path d="M851.6 107.5 V102.6 H862.5 V117.2 H855.5" fill="none" stroke="#a8a8a8" stroke-width="1.3"/><rect x="848.6" y="108.2" width="6.2" height="9.2" rx="0.6" fill="none" stroke="#a8a8a8" stroke-width="1.3"/></svg>
<div class="a" style="left:874px;top:102px;width:1px;height:16px;background:#474747;"></div>
<div class="t" style="left:892.70px;top:104.62px;font-size:12.5px;color:#d6d6d6;letter-spacing:-0.258px;">Elements</div>
<div class="t" style="left:967.30px;top:104.62px;font-size:12.5px;color:#d6d6d6;letter-spacing:-0.362px;">Console</div>
<div class="t" style="left:1034.60px;top:104.62px;font-size:12.5px;color:#d6d6d6;letter-spacing:-0.577px;">Sources</div>
<div class="a" style="left:1089px;top:97px;width:71px;height:26px;background:#000000;"></div>
<div class="t" style="left:1100.70px;top:104.62px;font-size:12.5px;color:#ffffff;letter-spacing:0.176px;">Network</div>
<svg style="left:1168px;top:106px" width="11" height="9" viewBox="0 0 11 9"><path d="M1 1 L4.5 4.5 L1 8 M6 1 L9.5 4.5 L6 8" fill="none" stroke="#a8a8a8" stroke-width="1.3"/></svg>
<div class="a" style="left:1275px;top:102px;width:1px;height:16px;background:#474747;"></div>
<svg style="left:0;top:0" width="1366" height="768" viewBox="0 0 1366 768"><polygon points="1293.80,103.10 1295.20,103.24 1295.84,105.38 1296.76,105.87 1298.89,105.21 1299.79,106.30 1298.72,108.26 1299.03,109.26 1301.00,110.30 1300.86,111.70 1298.72,112.34 1298.23,113.26 1298.89,115.39 1297.80,116.29 1295.84,115.22 1294.84,115.53 1293.80,117.50 1292.40,117.36 1291.76,115.22 1290.84,114.73 1288.71,115.39 1287.81,114.30 1288.88,112.34 1288.57,111.34 1286.60,110.30 1286.74,108.90 1288.88,108.26 1289.37,107.34 1288.71,105.21 1289.80,104.31 1291.76,105.38 1292.76,105.07" fill="#a0a0a0" transform="rotate(11.25 1293.8 110.3)"/><circle cx="1293.8" cy="110.3" r="2.38" fill="#292a2d"/></svg>
<svg style="left:1320px;top:103px" width="5" height="15" viewBox="0 0 5 15"><circle cx="2.4" cy="2.3" r="1.6" fill="#a0a0a0"/><circle cx="2.4" cy="7.5" r="1.6" fill="#a0a0a0"/><circle cx="2.4" cy="12.7" r="1.6" fill="#a0a0a0"/></svg>
<svg style="left:1344.5px;top:105px" width="11" height="11" viewBox="0 0 11 11"><path d="M1 1 L10 10 M10 1 L1 10" stroke="#a8a8a8" stroke-width="1.6"/></svg>
<div class="a" style="left:821.2px;top:130.6px;width:12.8px;height:12.8px;border-radius:50%;background:#f0203f;box-shadow:0 0 2px 1px rgba(240,32,63,0.35)"></div>
<svg style="left:849px;top:130px" width="15" height="15" viewBox="0 0 15 15"><circle cx="7.4" cy="7.3" r="5.6" fill="none" stroke="#9c9c9c" stroke-width="1.7"/><path d="M3.5 3.4 L11.3 11.2" stroke="#9c9c9c" stroke-width="1.7"/></svg>
<div class="a" style="left:874px;top:129px;width:1px;height:16px;background:#474747;"></div>
<svg style="left:885px;top:131px" width="16" height="14" viewBox="885 131 16 14"><path d="M886.6 132.6 H899.4 L894.6 137.6 V143.4 H891.4 V137.6 Z" fill="#2b5b9a" stroke="#3a7bd2" stroke-width="1.3" stroke-linejoin="round"/></svg>
<svg style="left:913px;top:130px" width="16" height="16" viewBox="0 0 16 16"><circle cx="6" cy="6" r="4.6" fill="none" stroke="#9c9c9c" stroke-width="1.6"/><path d="M9.3 9.3 L14.5 14.5" stroke="#9c9c9c" stroke-width="1.9"/></svg>
<div class="a" style="left:939px;top:129px;width:1px;height:16px;background:#474747;"></div>
<div class="a" style="left:950px;top:131px;width:12px;height:12px;border:1px solid #878787;border-radius:2px;background:#2b2b2b"></div>
<div class="t" style="left:968.30px;top:132.22px;font-size:12.5px;color:#d6d6d6;letter-spacing:-0.225px;">Preserve log</div>
<div class="a" style="left:1047px;top:131px;width:12px;height:12px;border:1px solid #878787;border-radius:2px;background:#2b2b2b"></div>
<div class="t" style="left:1065.80px;top:132.22px;font-size:12.5px;color:#d6d6d6;letter-spacing:-0.461px;">Disable cache</div>
<div class="a" style="left:1148px;top:129px;width:1px;height:16px;background:#474747;"></div>
<div class="t" style="left:1159.60px;top:132.22px;font-size:12.5px;color:#d6d6d6;letter-spacing:-0.328px;">Online</div>
<svg style="left:1219px;top:134px" width="8" height="7" viewBox="0 0 8 7"><path d="M0.2 0.4 H7.6 L3.9 6.6z" fill="#9a9a9a"/></svg>
<div class="a" style="left:1238px;top:129px;width:1px;height:16px;background:#474747;"></div>
<svg style="left:1251.5px;top:131px" width="11" height="12" viewBox="0 0 11 12"><path d="M5.5 0.3 L10.6 5.4 H7.3 V8.6 H3.7 V5.4 H0.4z" fill="#a0a0a0"/><rect x="0.3" y="10.2" width="10.4" height="1.5" fill="#a0a0a0"/></svg>
<svg style="left:1279.5px;top:131px" width="11" height="12" viewBox="0 0 11 12"><path d="M5.5 8.6 L10.6 3.5 H7.3 V0.3 H3.7 V3.5 H0.4z" fill="#a0a0a0"/><rect x="0.3" y="10.2" width="10.4" height="1.5" fill="#a0a0a0"/></svg>
<div class="a" style="left:1331px;top:129px;width:1px;height:16px;background:#474747;"></div>
<svg style="left:0;top:0" width="1366" height="768" viewBox="0 0 1366 768"><polygon points="1350.00,129.80 1351.40,129.94 1352.04,132.08 1352.96,132.57 1355.09,131.91 1355.99,133.00 1354.92,134.96 1355.23,135.96 1357.20,137.00 1357.06,138.40 1354.92,139.04 1354.43,139.96 1355.09,142.09 1354.00,142.99 1352.04,141.92 1351.04,142.23 1350.00,144.20 1348.60,144.06 1347.96,141.92 1347.04,141.43 1344.91,142.09 1344.01,141.00 1345.08,139.04 1344.77,138.04 1342.80,137.00 1342.94,135.60 1345.08,134.96 1345.57,134.04 1344.91,131.91 1346.00,131.01 1347.96,132.08 1348.96,131.77" fill="#a0a0a0" transform="rotate(11.25 1350 137)"/><circle cx="1350" cy="137" r="2.38" fill="#292a2d"/></svg>
<div class="a" style="left:816px;top:154px;width:163px;height:17.5px;background:#1f1f1f;"></div>
<div class="t" style="left:819.30px;top:157.92px;font-size:12.5px;color:#c2c2c2;letter-spacing:0.104px;">Filter</div>
<div class="a" style="left:992px;top:157px;width:12px;height:12px;border:1px solid #878787;border-radius:2px;background:#2b2b2b"></div>
<div class="t" style="left:1010.30px;top:158.32px;font-size:12.5px;color:#d6d6d6;letter-spacing:-0.465px;">Hide data URLs</div>
<div class="a" style="left:816px;top:178px;width:21px;height:18.7px;background:#5b5b5b;border-radius:5px"></div>
<div class="t" style="left:819.00px;top:182.32px;font-size:12.5px;color:#9e9e9e;letter-spacing:0.547px;">All</div>
<div class="a" style="left:841.5px;top:180px;width:1px;height:15px;background:#474747;"></div>
<div class="t" style="left:848.50px;top:182.32px;font-size:12.5px;color:#d6d6d6;letter-spacing:-1.553px;">XHR</div>
<div class="t" style="left:882.10px;top:182.32px;font-size:12.5px;color:#d6d6d6;letter-spacing:-2.594px;">JS</div>
<div class="t" style="left:904.80px;top:182.32px;font-size:12.5px;color:#d6d6d6;letter-spacing:-2.809px;">CSS</div>
<div class="t" style="left:934.80px;top:182.32px;font-size:12.5px;color:#d6d6d6;letter-spacing:-0.314px;">Img</div>
<div class="t" style="left:965.50px;top:182.32px;font-size:12.5px;color:#d6d6d6;letter-spacing:-0.312px;">Media</div>
<div class="t" style="left:1009.30px;top:182.32px;font-size:12.5px;color:#d6d6d6;letter-spacing:-0.139px;">Font</div>
<div class="t" style="left:1044.20px;top:182.32px;font-size:12.5px;color:#d6d6d6;letter-spacing:-0.067px;">Doc</div>
<div class="t" style="left:1075.20px;top:182.32px;font-size:12.5px;color:#d6d6d6;letter-spacing:-2.541px;">WS</div>
<div class="t" style="left:1103.00px;top:182.32px;font-size:12.5px;color:#d6d6d6;letter-spacing:0.081px;">Manifest</div>
<div class="t" style="left:1161.40px;top:182.32px;font-size:12.5px;color:#d6d6d6;letter-spacing:0.037px;">Other</div>
<div class="a" style="left:1208px;top:181px;width:12px;height:12px;border:1px solid #878787;border-radius:2px;background:#2b2b2b"></div>
<div class="t" style="left:1226.80px;top:182.32px;font-size:12.5px;color:#d6d6d6;letter-spacing:-0.336px;">Has blocked cookies</div>
<div class="a" style="left:820px;top:205px;width:12px;height:12px;border:1px solid #878787;border-radius:2px;background:#2b2b2b"></div>
<div class="t" style="left:838.40px;top:206.22px;font-size:12.5px;color:#d6d6d6;letter-spacing:-0.324px;">Blocked Requests</div>
<div class="a" style="left:812px;top:224px;width:554px;height:80px;background:#242424;"></div>
<div class="a" style="left:812px;top:304px;width:554px;height:1px;background:#474747;"></div>
<div class="a" style="left:904px;top:224px;width:1px;height:80px;background:#3a3a3a;"></div>
<div class="a" style="left:996px;top:224px;width:1px;height:80px;background:#3a3a3a;"></div>
<div class="a" style="left:1088px;top:224px;width:1px;height:80px;background:#3a3a3a;"></div>
<div class="a" style="left:1180px;top:224px;width:1px;height:80px;background:#3a3a3a;"></div>
<div class="a" style="left:1272px;top:224px;width:1px;height:80px;background:#3a3a3a;"></div>
<div class="a" style="left:1364px;top:224px;width:1px;height:80px;background:#3a3a3a;"></div>
<div class="t" style="left:865.50px;top:228.31px;font-size:10.5px;color:#d8d8d8;letter-spacing:0.000px;transform:scaleX(0.906);transform-origin:0 0">1000 ms</div>
<div class="t" style="left:957.50px;top:228.31px;font-size:10.5px;color:#d8d8d8;letter-spacing:0.000px;transform:scaleX(0.906);transform-origin:0 0">2000 ms</div>
<div class="t" style="left:1049.50px;top:228.31px;font-size:10.5px;color:#d8d8d8;letter-spacing:0.000px;transform:scaleX(0.906);transform-origin:0 0">3000 ms</div>
<div class="t" style="left:1141.50px;top:228.31px;font-size:10.5px;color:#d8d8d8;letter-spacing:0.000px;transform:scaleX(0.906);transform-origin:0 0">4000 ms</div>
<div class="t" style="left:1233.50px;top:228.31px;font-size:10.5px;color:#d8d8d8;letter-spacing:0.000px;transform:scaleX(0.906);transform-origin:0 0">5000 ms</div>
<div class="t" style="left:1325.50px;top:228.31px;font-size:10.5px;color:#d8d8d8;letter-spacing:0.000px;transform:scaleX(0.906);transform-origin:0 0">6000 ms</div>
<div class="a" style="left:812px;top:224px;width:2.5px;height:18px;background:#6b6b6b;"></div>
<div class="a" style="left:813px;top:251px;width:3px;height:2px;background:#bdbdbd;"></div>
<div class="a" style="left:816px;top:251px;width:8px;height:2px;background:#f29a1a;"></div>
<div class="a" style="left:824px;top:251px;width:12px;height:2px;background:#1fd45a;"></div>
<div class="a" style="left:836px;top:251px;width:2px;height:2px;background:#2a9df4;"></div>
<div class="a" style="left:838px;top:248.5px;width:3px;height:2px;background:#dddddd;"></div>
<div class="a" style="left:843px;top:244px;width:1px;height:60px;background:#f4b8b0;"></div>
<div class="a" style="left:845px;top:244px;width:1.3px;height:60px;background:#2a9df4;"></div>
<div class="a" style="left:846px;top:251px;width:11px;height:2px;background:#1fd45a;"></div>
<div class="a" style="left:857px;top:251px;width:1px;height:2px;background:#2a9df4;"></div>
<div class="a" style="left:838px;top:257px;width:1.5px;height:1.5px;background:#2a9df4;"></div>
<div class="a" style="left:842px;top:257px;width:1.5px;height:1.5px;background:#2a9df4;"></div>
<div class="a" style="left:838px;top:260px;width:1.5px;height:1.5px;background:#2a9df4;"></div>
<div class="a" style="left:842px;top:260px;width:1.5px;height:1.5px;background:#2a9df4;"></div>
<div class="a" style="left:838px;top:263px;width:1.5px;height:1.5px;background:#2a9df4;"></div>
<div class="a" style="left:842px;top:263px;width:1.5px;height:1.5px;background:#2a9df4;"></div>
<div class="a" style="left:842px;top:266px;width:1.5px;height:1.5px;background:#2a9df4;"></div>
<div class="a" style="left:842px;top:269px;width:1.5px;height:1.5px;background:#2a9df4;"></div>
<div class="a" style="left:1302px;top:251px;width:31px;height:2px;background:#1fd45a;"></div>
<div class="a" style="left:1333px;top:251px;width:1px;height:2px;background:#2a9df4;"></div>
<div class="a" style="left:812px;top:305px;width:554px;height:27px;background:#292a2d;"></div>
<div class="a" style="left:812px;top:332px;width:554px;height:1px;background:#474747;"></div>
<div class="a" style="left:944px;top:305px;width:1px;height:27px;background:#3d3d3d;"></div>
<div class="a" style="left:983px;top:305px;width:1px;height:27px;background:#3d3d3d;"></div>
<div class="a" style="left:1023.5px;top:305px;width:1px;height:27px;background:#3d3d3d;"></div>
<div class="a" style="left:1087.5px;top:305px;width:1px;height:27px;background:#3d3d3d;"></div>
<div class="a" style="left:1126px;top:305px;width:1px;height:27px;background:#3d3d3d;"></div>
<div class="a" style="left:1165.5px;top:305px;width:1px;height:27px;background:#3d3d3d;"></div>
<div class="t" style="left:817.50px;top:313.32px;font-size:12.5px;color:#d6d6d6;letter-spacing:-1.781px;">Name</div>
<div class="t" style="left:949.00px;top:313.32px;font-size:12.5px;color:#d6d6d6;letter-spacing:-1.355px;">Sta…</div>
<div class="t" style="left:988.30px;top:313.32px;font-size:12.5px;color:#d6d6d6;letter-spacing:-0.803px;">Type</div>
<div class="t" style="left:1028.20px;top:313.32px;font-size:12.5px;color:#d6d6d6;letter-spacing:0.439px;">Initiator</div>
<div class="t" style="left:1092.00px;top:313.32px;font-size:12.5px;color:#d6d6d6;letter-spacing:-0.943px;">Size</div>
<div class="t" style="left:1131.60px;top:313.32px;font-size:12.5px;color:#d6d6d6;letter-spacing:-0.438px;">Time</div>
<div class="t" style="left:1170.20px;top:313.32px;font-size:12.5px;color:#d6d6d6;letter-spacing:0.145px;">Waterfall</div>
<svg style="left:1346.5px;top:315.5px" width="9" height="7" viewBox="0 0 9 7"><path d="M4.5 0.2 L8.8 6.6 H0.2z" fill="#9a9a9a"/></svg>
<div class="a" style="left:812px;top:333px;width:554px;height:407px;overflow:hidden">
<div class="a" style="left:0px;top:-13px;width:539px;height:21px;background:#2a2a2a;"></div>
<svg style="left:7.7999999999999545px;top:-9px" width="11" height="13" viewBox="0 0 11 13"><rect width="10.4" height="13" fill="#fff"/><g stroke="#c4c4c4" stroke-width="0.9"><path d="M2 3h6.5M2 5h6.5M2 7h6.5M2 9h3.5M6.5 9h2M2 11h5"/></g></svg>
<div class="t" style="left:24.30px;top:-10.08px;font-size:12.5px;color:#d6d6d6;letter-spacing:0.000px;max-width:107px;overflow:hidden;text-overflow:clip;line-height:14px;height:16px">manifest.css?v=6</div>
<div class="t" style="left:137.00px;top:-10.08px;font-size:12.5px;color:#d6d6d6;letter-spacing:-0.430px;">200</div>
<div class="t" style="left:176.30px;top:-10.08px;font-size:12.5px;color:#d6d6d6;letter-spacing:0.000px;">sty…</div>
<div class="t" style="left:216.20px;top:-10.08px;font-size:12.5px;color:#d6d6d6;letter-spacing:0.000px;text-decoration:underline;text-underline-offset:1.5px">?id=ste…</div>
<div class="t" style="left:280.00px;top:-10.08px;font-size:12.5px;color:#d6d6d6;letter-spacing:0.000px;">(m…</div>
<div class="t" style="left:321.52px;top:-10.08px;font-size:12.5px;color:#d6d6d6;letter-spacing:0.000px;">0 ms</div>
<div class="a" style="left:0px;top:8px;width:539px;height:21px;background:#242424;"></div>
<svg style="left:7.7999999999999545px;top:12px" width="11" height="13" viewBox="0 0 11 13"><rect width="10.4" height="13" fill="#fff"/><g stroke="#c4c4c4" stroke-width="0.9"><path d="M2 3h6.5M2 5h6.5M2 7h6.5M2 9h3.5M6.5 9h2M2 11h5"/></g></svg>
<div class="t" style="left:24.30px;top:10.92px;font-size:12.5px;color:#d6d6d6;letter-spacing:0.000px;max-width:107px;overflow:hidden;text-overflow:clip;line-height:14px;height:16px">fonts.css</div>
<div class="t" style="left:137.00px;top:10.92px;font-size:12.5px;color:#d6d6d6;letter-spacing:-0.430px;">200</div>
<div class="t" style="left:176.30px;top:10.92px;font-size:12.5px;color:#d6d6d6;letter-spacing:0.000px;">sty…</div>
<div class="t" style="left:216.20px;top:10.92px;font-size:12.5px;color:#d6d6d6;letter-spacing:0.000px;text-decoration:underline;text-underline-offset:1.5px">?id=ste…</div>
<div class="t" style="left:280.00px;top:10.92px;font-size:12.5px;color:#d6d6d6;letter-spacing:0.000px;">(m…</div>
<div class="t" style="left:321.52px;top:10.92px;font-size:12.5px;color:#d6d6d6;letter-spacing:0.000px;">0 ms</div>
<div class="a" style="left:0px;top:29px;width:539px;height:21px;background:#2a2a2a;"></div>
<svg style="left:7.7999999999999545px;top:33px" width="11" height="13" viewBox="0 0 11 13"><rect width="10.4" height="13" fill="#fff"/><g stroke="#c4c4c4" stroke-width="0.9"><path d="M2 3h6.5M2 5h6.5M2 7h6.5M2 9h3.5M6.5 9h2M2 11h5"/></g></svg>
<div class="t" style="left:24.30px;top:31.92px;font-size:12.5px;color:#d6d6d6;letter-spacing:0.000px;max-width:107px;overflow:hidden;text-overflow:clip;line-height:14px;height:16px">all.css</div>
<div class="t" style="left:137.00px;top:31.92px;font-size:12.5px;color:#d6d6d6;letter-spacing:-0.430px;">200</div>
<div class="t" style="left:176.30px;top:31.92px;font-size:12.5px;color:#d6d6d6;letter-spacing:0.000px;">sty…</div>
<div class="t" style="left:216.20px;top:31.92px;font-size:12.5px;color:#d6d6d6;letter-spacing:0.000px;text-decoration:underline;text-underline-offset:1.5px">?id=ste…</div>
<div class="t" style="left:280.00px;top:31.92px;font-size:12.5px;color:#d6d6d6;letter-spacing:0.000px;">(m…</div>
<div class="t" style="left:321.52px;top:31.92px;font-size:12.5px;color:#d6d6d6;letter-spacing:0.000px;">0 ms</div>
<div class="a" style="left:0px;top:50px;width:539px;height:21px;background:#242424;"></div>
<svg style="left:7.7999999999999545px;top:54px" width="11" height="13" viewBox="0 0 11 13"><rect width="10.4" height="13" fill="#fff"/><path d="M4.5 4.5 A2.5 2.5 0 0 0 4.5 8.5" fill="none" stroke="#5b7fe0" stroke-width="0.9"/></svg>
<div class="t" style="left:24.30px;top:52.92px;font-size:12.5px;color:#d6d6d6;letter-spacing:0.000px;max-width:107px;overflow:hidden;text-overflow:clip;line-height:14px;height:16px">afx-logo.png</div>
<div class="t" style="left:137.00px;top:52.92px;font-size:12.5px;color:#d6d6d6;letter-spacing:-0.430px;">200</div>
<div class="t" style="left:176.30px;top:52.92px;font-size:12.5px;color:#d6d6d6;letter-spacing:0.000px;">png</div>
<div class="t" style="left:216.20px;top:52.92px;font-size:12.5px;color:#d6d6d6;letter-spacing:0.000px;text-decoration:underline;text-underline-offset:1.5px">?id=ste…</div>
<div class="t" style="left:280.00px;top:52.92px;font-size:12.5px;color:#d6d6d6;letter-spacing:0.000px;">(m…</div>
<div class="t" style="left:321.52px;top:52.92px;font-size:12.5px;color:#d6d6d6;letter-spacing:0.000px;">0 ms</div>
<div class="a" style="left:0px;top:71px;width:539px;height:21px;background:#2a2a2a;"></div>
<svg style="left:7.7999999999999545px;top:75px" width="11" height="13" viewBox="0 0 11 13"><rect width="10.4" height="13" fill="#fff"/><g stroke="#c4c4c4" stroke-width="0.9"><path d="M2 3h6.5M2 5h6.5M2 7h6.5M2 9h3.5M6.5 9h2M2 11h5"/></g></svg>
<div class="t" style="left:24.30px;top:73.92px;font-size:12.5px;color:#d6d6d6;letter-spacing:0.000px;max-width:107px;overflow:hidden;text-overflow:clip;line-height:14px;height:16px">icons.js</div>
<div class="t" style="left:137.00px;top:73.92px;font-size:12.5px;color:#d6d6d6;letter-spacing:-0.430px;">200</div>
<div class="t" style="left:176.30px;top:73.92px;font-size:12.5px;color:#d6d6d6;letter-spacing:0.000px;">script</div>
<div class="t" style="left:216.20px;top:73.92px;font-size:12.5px;color:#d6d6d6;letter-spacing:0.000px;text-decoration:underline;text-underline-offset:1.5px">?id=ste…</div>
<div class="t" style="left:280.00px;top:73.92px;font-size:12.5px;color:#d6d6d6;letter-spacing:0.000px;">(m…</div>
<div class="t" style="left:321.52px;top:73.92px;font-size:12.5px;color:#d6d6d6;letter-spacing:0.000px;">0 ms</div>
<div class="a" style="left:0px;top:92px;width:539px;height:21px;background:#242424;"></div>
<svg style="left:7.7999999999999545px;top:96px" width="11" height="13" viewBox="0 0 11 13"><rect width="10.4" height="13" fill="#fff"/><g stroke="#c4c4c4" stroke-width="0.9"><path d="M2 3h6.5M2 5h6.5M2 7h6.5M2 9h3.5M6.5 9h2M2 11h5"/></g></svg>
<div class="t" style="left:24.30px;top:94.92px;font-size:12.5px;color:#d6d6d6;letter-spacing:0.000px;max-width:107px;overflow:hidden;text-overflow:clip;line-height:14px;height:16px">withdrawFundsA…</div>
<div class="t" style="left:137.00px;top:94.92px;font-size:12.5px;color:#d6d6d6;letter-spacing:-0.430px;">200</div>
<div class="t" style="left:176.30px;top:94.92px;font-size:12.5px;color:#d6d6d6;letter-spacing:0.000px;">sty…</div>
<div class="t" style="left:216.20px;top:94.92px;font-size:12.5px;color:#d6d6d6;letter-spacing:0.000px;text-decoration:underline;text-underline-offset:1.5px">?id=ste…</div>
<div class="t" style="left:280.00px;top:94.92px;font-size:12.5px;color:#d6d6d6;letter-spacing:0.000px;">(di…</div>
<div class="t" style="left:321.52px;top:94.92px;font-size:12.5px;color:#d6d6d6;letter-spacing:0.000px;">6 ms</div>
<div class="a" style="left:0px;top:113px;width:539px;height:21px;background:#2a2a2a;"></div>
<svg style="left:7.7999999999999545px;top:117px" width="11" height="13" viewBox="0 0 11 13"><rect width="10.4" height="13" fill="#fff"/><g stroke="#c4c4c4" stroke-width="0.9"><path d="M2 3h6.5M2 5h6.5M2 7h6.5M2 9h3.5M6.5 9h2M2 11h5"/></g></svg>
<div class="t" style="left:24.30px;top:115.92px;font-size:12.5px;color:#d6d6d6;letter-spacing:0.000px;max-width:107px;overflow:hidden;text-overflow:clip;line-height:14px;height:16px">main.js?v=6</div>
<div class="t" style="left:137.00px;top:115.92px;font-size:12.5px;color:#d6d6d6;letter-spacing:-0.430px;">200</div>
<div class="t" style="left:176.30px;top:115.92px;font-size:12.5px;color:#d6d6d6;letter-spacing:0.000px;">script</div>
<div class="t" style="left:216.20px;top:115.92px;font-size:12.5px;color:#d6d6d6;letter-spacing:0.000px;text-decoration:underline;text-underline-offset:1.5px">?id=ste…</div>
<div class="t" style="left:280.00px;top:115.92px;font-size:12.5px;color:#d6d6d6;letter-spacing:0.000px;">(m…</div>
<div class="t" style="left:321.52px;top:115.92px;font-size:12.5px;color:#d6d6d6;letter-spacing:0.000px;">0 ms</div>
<div class="a" style="left:0px;top:134px;width:539px;height:21px;background:#242424;"></div>
<svg style="left:7.7999999999999545px;top:138px" width="11" height="13" viewBox="0 0 11 13"><rect width="10.4" height="13" fill="#fff"/><g stroke="#c4c4c4" stroke-width="0.9"><path d="M2 3h6.5M2 5h6.5M2 7h6.5M2 9h3.5M6.5 9h2M2 11h5"/></g></svg>
<div class="t" style="left:24.30px;top:136.92px;font-size:12.5px;color:#d6d6d6;letter-spacing:0.000px;max-width:107px;overflow:hidden;text-overflow:clip;line-height:14px;height:16px">qrcode.js?v=6</div>
<div class="t" style="left:137.00px;top:136.92px;font-size:12.5px;color:#d6d6d6;letter-spacing:-0.430px;">200</div>
<div class="t" style="left:176.30px;top:136.92px;font-size:12.5px;color:#d6d6d6;letter-spacing:0.000px;">script</div>
<div class="t" style="left:216.20px;top:136.92px;font-size:12.5px;color:#d6d6d6;letter-spacing:0.000px;text-decoration:underline;text-underline-offset:1.5px">?id=ste…</div>
<div class="t" style="left:280.00px;top:136.92px;font-size:12.5px;color:#d6d6d6;letter-spacing:0.000px;">(m…</div>
<div class="t" style="left:321.52px;top:136.92px;font-size:12.5px;color:#d6d6d6;letter-spacing:0.000px;">0 ms</div>
<div class="a" style="left:0px;top:155px;width:539px;height:21px;background:#2a2a2a;"></div>
<svg style="left:7.7999999999999545px;top:159px" width="11" height="13" viewBox="0 0 11 13"><rect width="10.4" height="13" fill="#fff"/><g stroke="#c4c4c4" stroke-width="0.9"><path d="M2 3h6.5M2 5h6.5M2 7h6.5M2 9h3.5M6.5 9h2M2 11h5"/></g></svg>
<div class="t" style="left:24.30px;top:157.92px;font-size:12.5px;color:#d6d6d6;letter-spacing:0.000px;max-width:107px;overflow:hidden;text-overflow:clip;line-height:14px;height:16px">qrcode.min.js?v=6</div>
<div class="t" style="left:137.00px;top:157.92px;font-size:12.5px;color:#d6d6d6;letter-spacing:-0.430px;">200</div>
<div class="t" style="left:176.30px;top:157.92px;font-size:12.5px;color:#d6d6d6;letter-spacing:0.000px;">script</div>
<div class="t" style="left:216.20px;top:157.92px;font-size:12.5px;color:#d6d6d6;letter-spacing:0.000px;text-decoration:underline;text-underline-offset:1.5px">?id=ste…</div>
<div class="t" style="left:280.00px;top:157.92px;font-size:12.5px;color:#d6d6d6;letter-spacing:0.000px;">(m…</div>
<div class="t" style="left:321.52px;top:157.92px;font-size:12.5px;color:#d6d6d6;letter-spacing:0.000px;">0 ms</div>
<div class="a" style="left:0px;top:176px;width:539px;height:21px;background:#242424;"></div>
<svg style="left:7.7999999999999545px;top:180px" width="11" height="13" viewBox="0 0 11 13"><rect width="10.4" height="13" fill="#fff"/><g stroke="#c4c4c4" stroke-width="0.9"><path d="M2 3h6.5M2 5h6.5M2 7h6.5M2 9h3.5M6.5 9h2M2 11h5"/></g></svg>
<div class="t" style="left:24.30px;top:178.92px;font-size:12.5px;color:#d6d6d6;letter-spacing:0.000px;max-width:107px;overflow:hidden;text-overflow:clip;line-height:14px;height:16px">withdrawFundsA…</div>
<div class="t" style="left:137.00px;top:178.92px;font-size:12.5px;color:#d6d6d6;letter-spacing:-0.430px;">200</div>
<div class="t" style="left:176.30px;top:178.92px;font-size:12.5px;color:#d6d6d6;letter-spacing:0.000px;">script</div>
<div class="t" style="left:216.20px;top:178.92px;font-size:12.5px;color:#d6d6d6;letter-spacing:0.000px;text-decoration:underline;text-underline-offset:1.5px">?id=ste…</div>
<div class="t" style="left:280.00px;top:178.92px;font-size:12.5px;color:#d6d6d6;letter-spacing:0.000px;">(di…</div>
<div class="t" style="left:321.52px;top:178.92px;font-size:12.5px;color:#d6d6d6;letter-spacing:0.000px;">4 ms</div>
<div class="a" style="left:0px;top:197px;width:539px;height:21px;background:#2a2a2a;"></div>
<svg style="left:7.7999999999999545px;top:201px" width="11" height="13" viewBox="0 0 11 13"><rect width="10.4" height="13" fill="#fff"/><g stroke="#c4c4c4" stroke-width="0.9"><path d="M2 3h6.5M2 5h6.5M2 7h6.5M2 9h3.5M6.5 9h2M2 11h5"/></g></svg>
<div class="t" style="left:24.30px;top:199.92px;font-size:12.5px;color:#d6d6d6;letter-spacing:0.000px;max-width:107px;overflow:hidden;text-overflow:clip;line-height:14px;height:16px">withdrawFundsA…</div>
<div class="t" style="left:137.00px;top:199.92px;font-size:12.5px;color:#d6d6d6;letter-spacing:-0.430px;">200</div>
<div class="t" style="left:176.30px;top:199.92px;font-size:12.5px;color:#d6d6d6;letter-spacing:0.000px;">script</div>
<div class="t" style="left:216.20px;top:199.92px;font-size:12.5px;color:#d6d6d6;letter-spacing:0.000px;text-decoration:underline;text-underline-offset:1.5px">?id=ste…</div>
<div class="t" style="left:280.00px;top:199.92px;font-size:12.5px;color:#d6d6d6;letter-spacing:0.000px;">(di…</div>
<div class="t" style="left:321.52px;top:199.92px;font-size:12.5px;color:#d6d6d6;letter-spacing:0.000px;">2 ms</div>
<div class="a" style="left:0px;top:218px;width:539px;height:21px;background:#242424;"></div>
<div class="a" style="left:7.7999999999999545px;top:222px;width:10.4px;height:13px;background:#ffffff;"></div>
<div class="t" style="left:24.30px;top:220.92px;font-size:12.5px;color:#d6d6d6;letter-spacing:0.000px;max-width:107px;overflow:hidden;text-overflow:clip;line-height:14px;height:16px">Poppins-Bold.ttf</div>
<div class="t" style="left:137.00px;top:220.92px;font-size:12.5px;color:#d6d6d6;letter-spacing:-0.430px;">200</div>
<div class="t" style="left:176.30px;top:220.92px;font-size:12.5px;color:#d6d6d6;letter-spacing:0.000px;">font</div>
<div class="t" style="left:216.20px;top:220.92px;font-size:12.5px;color:#d6d6d6;letter-spacing:0.000px;text-decoration:underline;text-underline-offset:1.5px">fonts.css</div>
<div class="t" style="left:280.00px;top:220.92px;font-size:12.5px;color:#d6d6d6;letter-spacing:0.000px;">(m…</div>
<div class="t" style="left:321.52px;top:220.92px;font-size:12.5px;color:#d6d6d6;letter-spacing:0.000px;">0 ms</div>
<div class="a" style="left:0px;top:239px;width:539px;height:21px;background:#2a2a2a;"></div>
<div class="a" style="left:7.7999999999999545px;top:243px;width:10.4px;height:13px;background:#ffffff;"></div>
<div class="t" style="left:24.30px;top:241.92px;font-size:12.5px;color:#d6d6d6;letter-spacing:0.000px;max-width:107px;overflow:hidden;text-overflow:clip;line-height:14px;height:16px">Poppins-Regular.…</div>
<div class="t" style="left:137.00px;top:241.92px;font-size:12.5px;color:#d6d6d6;letter-spacing:-0.430px;">200</div>
<div class="t" style="left:176.30px;top:241.92px;font-size:12.5px;color:#d6d6d6;letter-spacing:0.000px;">font</div>
<div class="t" style="left:216.20px;top:241.92px;font-size:12.5px;color:#d6d6d6;letter-spacing:0.000px;text-decoration:underline;text-underline-offset:1.5px">fonts.css</div>
<div class="t" style="left:280.00px;top:241.92px;font-size:12.5px;color:#d6d6d6;letter-spacing:0.000px;">(m…</div>
<div class="t" style="left:321.52px;top:241.92px;font-size:12.5px;color:#d6d6d6;letter-spacing:0.000px;">0 ms</div>
<div class="a" style="left:0px;top:260px;width:539px;height:21px;background:#242424;"></div>
<div class="a" style="left:7.7999999999999545px;top:264px;width:10.4px;height:13px;background:#ffffff;"></div>
<div class="t" style="left:24.30px;top:262.92px;font-size:12.5px;color:#d6d6d6;letter-spacing:0.000px;max-width:107px;overflow:hidden;text-overflow:clip;line-height:14px;height:16px">Poppins-Medium…</div>
<div class="t" style="left:137.00px;top:262.92px;font-size:12.5px;color:#d6d6d6;letter-spacing:-0.430px;">200</div>
<div class="t" style="left:176.30px;top:262.92px;font-size:12.5px;color:#d6d6d6;letter-spacing:0.000px;">font</div>
<div class="t" style="left:216.20px;top:262.92px;font-size:12.5px;color:#d6d6d6;letter-spacing:0.000px;text-decoration:underline;text-underline-offset:1.5px">fonts.css</div>
<div class="t" style="left:280.00px;top:262.92px;font-size:12.5px;color:#d6d6d6;letter-spacing:0.000px;">(m…</div>
<div class="t" style="left:321.52px;top:262.92px;font-size:12.5px;color:#d6d6d6;letter-spacing:0.000px;">0 ms</div>
<div class="a" style="left:0px;top:281px;width:539px;height:21px;background:#2a2a2a;"></div>
<div class="a" style="left:7.7999999999999545px;top:285px;width:10.4px;height:13px;background:#ffffff;"></div>
<div class="t" style="left:24.30px;top:283.92px;font-size:12.5px;color:#d6d6d6;letter-spacing:0.000px;max-width:107px;overflow:hidden;text-overflow:clip;line-height:14px;height:16px">OpenSans-Regul…</div>
<div class="t" style="left:137.00px;top:283.92px;font-size:12.5px;color:#d6d6d6;letter-spacing:-0.430px;">200</div>
<div class="t" style="left:176.30px;top:283.92px;font-size:12.5px;color:#d6d6d6;letter-spacing:0.000px;">font</div>
<div class="t" style="left:216.20px;top:283.92px;font-size:12.5px;color:#d6d6d6;letter-spacing:0.000px;text-decoration:underline;text-underline-offset:1.5px">fonts.css</div>
<div class="t" style="left:280.00px;top:283.92px;font-size:12.5px;color:#d6d6d6;letter-spacing:0.000px;">(m…</div>
<div class="t" style="left:321.52px;top:283.92px;font-size:12.5px;color:#d6d6d6;letter-spacing:0.000px;">0 ms</div>
<div class="a" style="left:0px;top:302px;width:539px;height:21px;background:#242424;"></div>
<div class="a" style="left:7.7999999999999545px;top:306px;width:10.4px;height:13px;background:#ffffff;"></div>
<div class="t" style="left:24.30px;top:304.92px;font-size:12.5px;color:#d6d6d6;letter-spacing:0.000px;max-width:107px;overflow:hidden;text-overflow:clip;line-height:14px;height:16px">Roboto-Bold.ttf</div>
<div class="t" style="left:137.00px;top:304.92px;font-size:12.5px;color:#d6d6d6;letter-spacing:-0.430px;">200</div>
<div class="t" style="left:176.30px;top:304.92px;font-size:12.5px;color:#d6d6d6;letter-spacing:0.000px;">font</div>
<div class="t" style="left:216.20px;top:304.92px;font-size:12.5px;color:#d6d6d6;letter-spacing:0.000px;text-decoration:underline;text-underline-offset:1.5px">fonts.css</div>
<div class="t" style="left:280.00px;top:304.92px;font-size:12.5px;color:#d6d6d6;letter-spacing:0.000px;">(m…</div>
<div class="t" style="left:321.52px;top:304.92px;font-size:12.5px;color:#d6d6d6;letter-spacing:0.000px;">0 ms</div>
<div class="a" style="left:0px;top:323px;width:539px;height:21px;background:#2a2a2a;"></div>
<div class="a" style="left:7.7999999999999545px;top:327px;width:10.4px;height:13px;background:#ffffff;"></div>
<div class="t" style="left:24.30px;top:325.92px;font-size:12.5px;color:#d6d6d6;letter-spacing:0.000px;max-width:107px;overflow:hidden;text-overflow:clip;line-height:14px;height:16px">Roboto-Regular.ttf</div>
<div class="t" style="left:137.00px;top:325.92px;font-size:12.5px;color:#d6d6d6;letter-spacing:-0.430px;">200</div>
<div class="t" style="left:176.30px;top:325.92px;font-size:12.5px;color:#d6d6d6;letter-spacing:0.000px;">font</div>
<div class="t" style="left:216.20px;top:325.92px;font-size:12.5px;color:#d6d6d6;letter-spacing:0.000px;text-decoration:underline;text-underline-offset:1.5px">fonts.css</div>
<div class="t" style="left:280.00px;top:325.92px;font-size:12.5px;color:#d6d6d6;letter-spacing:0.000px;">(m…</div>
<div class="t" style="left:321.52px;top:325.92px;font-size:12.5px;color:#d6d6d6;letter-spacing:0.000px;">0 ms</div>
<div class="a" style="left:0px;top:344px;width:539px;height:21px;background:#242424;"></div>
<div class="a" style="left:7.7999999999999545px;top:348px;width:10.4px;height:13px;background:#ffffff;"></div>
<div class="t" style="left:24.30px;top:346.92px;font-size:12.5px;color:#d6d6d6;letter-spacing:0.000px;max-width:107px;overflow:hidden;text-overflow:clip;line-height:14px;height:16px">fa-solid-900.woff2</div>
<div class="t" style="left:137.00px;top:346.92px;font-size:12.5px;color:#d6d6d6;letter-spacing:-0.430px;">200</div>
<div class="t" style="left:176.30px;top:346.92px;font-size:12.5px;color:#d6d6d6;letter-spacing:0.000px;">font</div>
<div class="t" style="left:216.20px;top:346.92px;font-size:12.5px;color:#d6d6d6;letter-spacing:0.000px;text-decoration:underline;text-underline-offset:1.5px">all.css</div>
<div class="t" style="left:280.00px;top:346.92px;font-size:12.5px;color:#d6d6d6;letter-spacing:0.000px;">(m…</div>
<div class="t" style="left:321.52px;top:346.92px;font-size:12.5px;color:#d6d6d6;letter-spacing:0.000px;">0 ms</div>
<div class="a" style="left:0px;top:365px;width:539px;height:21px;background:#2a2a2a;"></div>
<div class="a" style="left:7.7999999999999545px;top:369px;width:10.4px;height:13px;background:#ffffff;"></div>
<div class="t" style="left:24.30px;top:367.92px;font-size:12.5px;color:#d6d6d6;letter-spacing:0.000px;max-width:107px;overflow:hidden;text-overflow:clip;line-height:14px;height:16px">entry.php?sessio…</div>
<div class="t" style="left:137.00px;top:367.92px;font-size:12.5px;color:#d6d6d6;letter-spacing:-0.430px;">200</div>
<div class="t" style="left:176.30px;top:367.92px;font-size:12.5px;color:#d6d6d6;letter-spacing:0.000px;">xhr</div>
<div class="t" style="left:216.20px;top:367.92px;font-size:12.5px;color:#d6d6d6;letter-spacing:0.000px;text-decoration:underline;text-underline-offset:1.5px">main.js?…</div>
<div class="t" style="left:280.00px;top:367.92px;font-size:12.5px;color:#d6d6d6;letter-spacing:0.000px;">5.3…</div>
<div class="t" style="left:322.19px;top:367.92px;font-size:12.5px;color:#d6d6d6;letter-spacing:0.000px;">14…</div>
<div class="a" style="left:0px;top:386px;width:539px;height:21px;background:#242424;"></div>
<div class="a" style="left:7.7999999999999545px;top:390px;width:10.4px;height:13px;background:#ffffff;"></div>
<div class="t" style="left:24.30px;top:388.92px;font-size:12.5px;color:#d6d6d6;letter-spacing:0.000px;max-width:107px;overflow:hidden;text-overflow:clip;line-height:14px;height:16px">valid.php?sessio…</div>
<div class="t" style="left:137.00px;top:388.92px;font-size:12.5px;color:#d6d6d6;letter-spacing:-0.430px;">200</div>
<div class="t" style="left:176.30px;top:388.92px;font-size:12.5px;color:#d6d6d6;letter-spacing:0.000px;">xhr</div>
<div class="t" style="left:216.20px;top:388.92px;font-size:12.5px;color:#d6d6d6;letter-spacing:0.000px;text-decoration:underline;text-underline-offset:1.5px">main.js?…</div>
<div class="t" style="left:280.00px;top:388.92px;font-size:12.5px;color:#d6d6d6;letter-spacing:0.000px;">29…</div>
<div class="t" style="left:322.19px;top:388.92px;font-size:12.5px;color:#d6d6d6;letter-spacing:0.000px;">32…</div>
<div class="a" style="left:132px;top:0px;width:1px;height:407px;background:#3a3a3a;"></div>
<div class="a" style="left:171px;top:0px;width:1px;height:407px;background:#3a3a3a;"></div>
<div class="a" style="left:211.5px;top:0px;width:1px;height:407px;background:#3a3a3a;"></div>
<div class="a" style="left:275.5px;top:0px;width:1px;height:407px;background:#3a3a3a;"></div>
<div class="a" style="left:314px;top:0px;width:1px;height:407px;background:#3a3a3a;"></div>
<div class="a" style="left:353.5px;top:0px;width:1px;height:407px;background:#3a3a3a;"></div>
<div class="a" style="left:419.5px;top:0px;width:1px;height:407px;background:#3a3a3a;"></div>
<div class="a" style="left:485.5px;top:0px;width:1px;height:407px;background:#3a3a3a;"></div>
<div class="a" style="left:367.29999999999995px;top:-8px;width:1.2px;height:11px;background:#3aa2ee;"></div>
<div class="a" style="left:367.29999999999995px;top:13px;width:1.2px;height:11px;background:#3aa2ee;"></div>
<div class="a" style="left:367.29999999999995px;top:34px;width:1.2px;height:11px;background:#3aa2ee;"></div>
<div class="a" style="left:367.29999999999995px;top:55px;width:1.2px;height:11px;background:#3aa2ee;"></div>
<div class="a" style="left:367.29999999999995px;top:76px;width:1.2px;height:11px;background:#3aa2ee;"></div>
<div class="a" style="left:367.29999999999995px;top:97px;width:1.2px;height:11px;background:#3aa2ee;"></div>
<div class="a" style="left:367.29999999999995px;top:118px;width:1.2px;height:11px;background:#3aa2ee;"></div>
<div class="a" style="left:367.29999999999995px;top:139px;width:1.2px;height:11px;background:#3aa2ee;"></div>
<div class="a" style="left:367.29999999999995px;top:160px;width:1.2px;height:11px;background:#3aa2ee;"></div>
<div class="a" style="left:367.29999999999995px;top:181px;width:1.2px;height:11px;background:#3aa2ee;"></div>
<div class="a" style="left:367.29999999999995px;top:202px;width:1.2px;height:11px;background:#3aa2ee;"></div>
<div class="a" style="left:367.29999999999995px;top:223px;width:1.2px;height:11px;background:#3aa2ee;"></div>
<div class="a" style="left:367.29999999999995px;top:244px;width:1.2px;height:11px;background:#3aa2ee;"></div>
<div class="a" style="left:367.29999999999995px;top:265px;width:1.2px;height:11px;background:#3aa2ee;"></div>
<div class="a" style="left:367.29999999999995px;top:286px;width:1.2px;height:11px;background:#3aa2ee;"></div>
<div class="a" style="left:367.29999999999995px;top:307px;width:1.2px;height:11px;background:#3aa2ee;"></div>
<div class="a" style="left:367.29999999999995px;top:328px;width:1.2px;height:11px;background:#3aa2ee;"></div>
<div class="a" style="left:367.29999999999995px;top:349px;width:1.2px;height:11px;background:#3aa2ee;"></div>
<div class="a" style="left:367.29999999999995px;top:370px;width:1.2px;height:11px;background:#3aa2ee;"></div>
<div class="a" style="left:367.29999999999995px;top:391px;width:1.2px;height:11px;background:#3aa2ee;"></div>
<div class="a" style="left:368.5px;top:0px;width:1px;height:407px;background:#8a1836;"></div>
<div class="a" style="left:369.5999999999999px;top:0px;width:1.3px;height:407px;background:#4b5fc0;"></div>
<div class="a" style="left:369.29999999999995px;top:369px;width:4.5px;height:13px;background:#1fd45a;"></div>
<div class="a" style="left:373.79999999999995px;top:369px;width:1.2px;height:13px;background:#2a9df4;"></div>
<div class="a" style="left:528px;top:390px;width:10px;height:13px;background:#1fd45a;"></div>
<div class="a" style="left:538px;top:390px;width:1px;height:13px;background:#2a9df4;"></div>
<div class="a" style="left:526.5px;top:392px;width:1.5px;height:9px;background:#dddddd;"></div>
<div class="a" style="left:539px;top:0px;width:15px;height:407px;background:#262626;"></div>
<div class="a" style="left:539px;top:31px;width:14px;height:375px;background:#3b3b3b;border-radius:2px"></div>
</div>
<div class="a" style="left:812px;top:740px;width:554px;height:1px;background:#474747;"></div>
<div class="a" style="left:812px;top:741px;width:554px;height:27px;background:#292a2d;"></div>
<div class="t" style="left:823.30px;top:748.92px;font-size:12.5px;color:#d6d6d6;letter-spacing:-0.161px;">21 requests</div>
<div class="a" style="left:896px;top:746px;width:1px;height:16px;background:#474747;"></div>
<div class="t" style="left:906.60px;top:748.92px;font-size:12.5px;color:#d6d6d6;letter-spacing:-0.127px;">14.6 kB transferred</div>
<div class="a" style="left:1021px;top:746px;width:1px;height:16px;background:#474747;"></div>
<div class="t" style="left:1030.80px;top:748.92px;font-size:12.5px;color:#d6d6d6;letter-spacing:-0.396px;">1.2 MB resources</div>
<div class="a" style="left:1132.5px;top:746px;width:1px;height:16px;background:#474747;"></div>
<div class="t" style="left:1142.00px;top:748.92px;font-size:12.5px;color:#d6d6d6;letter-spacing:-0.450px;">Finish: 5.64 s</div>
<div class="a" style="left:1220.5px;top:746px;width:1px;height:16px;background:#474747;"></div>
<div class="t" style="left:1230.00px;top:748.92px;font-size:12.5px;color:#3d93e8;letter-spacing:0.000px;">DOMContentLoaded: 360 ms</div>
</div><!--/dtc-->
</body></html>
